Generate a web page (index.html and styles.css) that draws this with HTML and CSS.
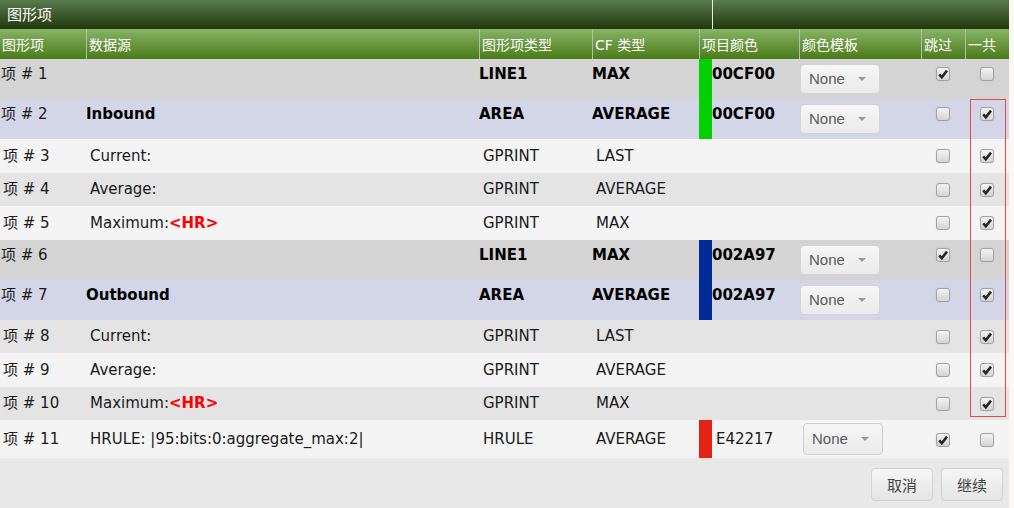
FILE: index.html
```html
<!DOCTYPE html>
<html lang="zh">
<head>
<meta charset="utf-8">
<title>图形项</title>
<link rel="stylesheet" href="styles.css">
</head>
<body>
<div class="panel">
  <div class="title-bar">
    <div class="title-main">图形项</div>
    <div class="title-rest"></div>
  </div>
  <table class="grid">
    <thead>
      <tr>
        <th class="c-item">图形项</th>
        <th class="c-src">数据源</th>
        <th class="c-type">图形项类型</th>
        <th class="c-cf">CF 类型</th>
        <th class="c-color">项目颜色</th>
        <th class="c-tpl">颜色模板</th>
        <th class="c-skip">跳过</th>
        <th class="c-total">一共</th>
      </tr>
    </thead>
    <tbody>
      <tr class="main grey">
        <td class="idx">项 # 1</td>
        <td></td>
        <td>LINE1</td>
        <td>MAX</td>
        <td class="color sw-green">00CF00</td>
        <td><span class="select">None<i class="caret"></i></span></td>
        <td class="chk"><span class="cb on"><svg viewBox="0 0 12 12"><path d="M2.2 6.3 L4.8 9.2 L10 2.6"/></svg></span></td>
        <td class="chk"><span class="cb"></span></td>
      </tr>
      <tr class="main lav">
        <td class="idx">项 # 2</td>
        <td>Inbound</td>
        <td>AREA</td>
        <td>AVERAGE</td>
        <td class="color sw-green">00CF00</td>
        <td><span class="select">None<i class="caret"></i></span></td>
        <td class="chk"><span class="cb"></span></td>
        <td class="chk"><span class="cb on"><svg viewBox="0 0 12 12"><path d="M2.2 6.3 L4.8 9.2 L10 2.6"/></svg></span></td>
      </tr>
      <tr class="sub light">
        <td class="idx">项 # 3</td>
        <td>Current:</td>
        <td>GPRINT</td>
        <td>LAST</td>
        <td></td>
        <td></td>
        <td class="chk"><span class="cb"></span></td>
        <td class="chk"><span class="cb on"><svg viewBox="0 0 12 12"><path d="M2.2 6.3 L4.8 9.2 L10 2.6"/></svg></span></td>
      </tr>
      <tr class="sub dark">
        <td class="idx">项 # 4</td>
        <td>Average:</td>
        <td>GPRINT</td>
        <td>AVERAGE</td>
        <td></td>
        <td></td>
        <td class="chk"><span class="cb"></span></td>
        <td class="chk"><span class="cb on"><svg viewBox="0 0 12 12"><path d="M2.2 6.3 L4.8 9.2 L10 2.6"/></svg></span></td>
      </tr>
      <tr class="sub light">
        <td class="idx">项 # 5</td>
        <td>Maximum:<b class="hr">&lt;HR&gt;</b></td>
        <td>GPRINT</td>
        <td>MAX</td>
        <td></td>
        <td></td>
        <td class="chk"><span class="cb"></span></td>
        <td class="chk"><span class="cb on"><svg viewBox="0 0 12 12"><path d="M2.2 6.3 L4.8 9.2 L10 2.6"/></svg></span></td>
      </tr>
      <tr class="main grey">
        <td class="idx">项 # 6</td>
        <td></td>
        <td>LINE1</td>
        <td>MAX</td>
        <td class="color sw-blue">002A97</td>
        <td><span class="select">None<i class="caret"></i></span></td>
        <td class="chk"><span class="cb on"><svg viewBox="0 0 12 12"><path d="M2.2 6.3 L4.8 9.2 L10 2.6"/></svg></span></td>
        <td class="chk"><span class="cb"></span></td>
      </tr>
      <tr class="main lav">
        <td class="idx">项 # 7</td>
        <td>Outbound</td>
        <td>AREA</td>
        <td>AVERAGE</td>
        <td class="color sw-blue">002A97</td>
        <td><span class="select">None<i class="caret"></i></span></td>
        <td class="chk"><span class="cb"></span></td>
        <td class="chk"><span class="cb on"><svg viewBox="0 0 12 12"><path d="M2.2 6.3 L4.8 9.2 L10 2.6"/></svg></span></td>
      </tr>
      <tr class="sub dark">
        <td class="idx">项 # 8</td>
        <td>Current:</td>
        <td>GPRINT</td>
        <td>LAST</td>
        <td></td>
        <td></td>
        <td class="chk"><span class="cb"></span></td>
        <td class="chk"><span class="cb on"><svg viewBox="0 0 12 12"><path d="M2.2 6.3 L4.8 9.2 L10 2.6"/></svg></span></td>
      </tr>
      <tr class="sub light">
        <td class="idx">项 # 9</td>
        <td>Average:</td>
        <td>GPRINT</td>
        <td>AVERAGE</td>
        <td></td>
        <td></td>
        <td class="chk"><span class="cb"></span></td>
        <td class="chk"><span class="cb on"><svg viewBox="0 0 12 12"><path d="M2.2 6.3 L4.8 9.2 L10 2.6"/></svg></span></td>
      </tr>
      <tr class="sub dark">
        <td class="idx">项 # 10</td>
        <td>Maximum:<b class="hr">&lt;HR&gt;</b></td>
        <td>GPRINT</td>
        <td>MAX</td>
        <td></td>
        <td></td>
        <td class="chk"><span class="cb"></span></td>
        <td class="chk"><span class="cb on"><svg viewBox="0 0 12 12"><path d="M2.2 6.3 L4.8 9.2 L10 2.6"/></svg></span></td>
      </tr>
      <tr class="sub light last">
        <td class="idx">项 # 11</td>
        <td>HRULE: |95:bits:0:aggregate_max:2|</td>
        <td>HRULE</td>
        <td>AVERAGE</td>
        <td class="color sw-red">E42217</td>
        <td><span class="select">None<i class="caret"></i></span></td>
        <td class="chk"><span class="cb on"><svg viewBox="0 0 12 12"><path d="M2.2 6.3 L4.8 9.2 L10 2.6"/></svg></span></td>
        <td class="chk"><span class="cb"></span></td>
      </tr>
    </tbody>
  </table>
  <div class="footer">
    <button class="btn">取消</button>
    <button class="btn">继续</button>
  </div>
  <div class="highlight"></div>
</div>
</body>
</html>
```

FILE: styles.css
```css
html, body {
  margin: 0;
  padding: 0;
}
body {
  background: #faf7f7;
  font-family: "DejaVu Sans", "Noto Sans CJK SC", sans-serif;
  font-size: 15px;
  color: #1a1a1a;
}
.panel {
  position: relative;
  width: 1009px;
}
.title-bar {
  display: flex;
  height: 29px;
  background: linear-gradient(#5a7b4e, #1e380b);
}
.title-main {
  box-sizing: border-box;
  width: 713px;
  border-right: 1px solid #e8ece4;
  padding-left: 7px;
  line-height: 28px;
  color: #fff;
  font-family: "Noto Sans CJK SC", sans-serif;
  font-size: 15px;
}
.title-rest {
  flex: 1;
}
.grid {
  width: 1009px;
  table-layout: fixed;
  border-collapse: separate;
  border-spacing: 0;
}
.grid th, .grid td {
  box-sizing: border-box;
  white-space: nowrap;
  overflow: hidden;
}
.grid th {
  height: 30px;
  padding: 0 0 1px 2px;
  text-align: left;
  font-weight: normal;
  font-family: "DejaVu Sans", "Noto Sans CJK SC", sans-serif;
  font-size: 14px;
  color: #fff;
  background: linear-gradient(#88b466, #4a7b18);
  border-left: 1px solid #b3bfa9;
}
.grid th.c-item { width: 86px; border-left: none; }
.grid th.c-src { width: 393px; }
.grid th.c-type { width: 113px; }
.grid th.c-cf { width: 107px; }
.grid th.c-color { width: 100px; }
.grid th.c-tpl { width: 122px; }
.grid th.c-skip { width: 44px; }
.grid th.c-total { width: 44px; }

.grey td { background: #d4d4d4; }
.lav td { background: #d3d6e7; }
.light td { background: #f4f4f4; }
.dark td { background: #e4e4e4; }

.main td {
  height: 40px;
  padding: 5px 0 0 0;
  vertical-align: top;
  line-height: 20px;
  font-weight: bold;
  color: #000;
}
.main td.idx {
  padding-left: 1px;
  font-weight: normal;
  color: #1a1a1a;
}
.sub td {
  height: 33.5px;
  padding: 0 0 0 4px;
  vertical-align: middle;
  line-height: 20px;
}
.sub td.idx { padding-left: 3px; }
.sub.last td {
  height: 39px;
  border-bottom: 1px solid #f1eaea;
}
.hr {
  color: #f00;
  font-weight: bold;
}
.color { padding-left: 13px !important; }
.sub .color { padding-left: 17px !important; }
.sw-green { box-shadow: inset 13px 0 0 #00cf00; }
.sw-blue { box-shadow: inset 13px 0 0 #002a97; }
.sw-red { box-shadow: inset 13px 0 0 #e42217; }

.select {
  box-sizing: border-box;
  display: inline-flex;
  align-items: center;
  width: 80px;
  height: 30px;
  padding: 0 0 0 8px;
  margin-left: 1px;
  border: 1px solid #d4d4d4;
  border-radius: 4px;
  background: linear-gradient(#f6f6f6, #ebebeb);
  font-family: "Liberation Sans", Arial, sans-serif;
  font-weight: normal;
  font-size: 15px;
  color: #5a5a5a;
  vertical-align: top;
}
.sub .select {
  margin-left: 0;
  height: 32px;
  border-color: #cfcfcf;
}
.caret {
  width: 0;
  height: 0;
  margin-left: 13px;
  border-left: 4px solid transparent;
  border-right: 4px solid transparent;
  border-top: 4px solid #9a9a9a;
}
.grid td.chk {
  padding-left: 0;
  text-align: center;
}
.main td.chk { padding-top: 8px; line-height: 14px; }
.cb {
  box-sizing: border-box;
  display: inline-block;
  width: 14px;
  height: 14px;
  border: 1px solid #a3a3a3;
  border-radius: 3px;
  background: linear-gradient(#f3f3f3, #d4d4d4);
  box-shadow: 0 0 1px rgba(0,0,0,0.2);
  vertical-align: middle;
}
.main .cb { vertical-align: top; }
.cb svg {
  display: block;
  width: 12px;
  height: 12px;
}
.cb svg path {
  fill: none;
  stroke: #262626;
  stroke-width: 2.6;
}
.footer {
  display: flex;
  justify-content: flex-end;
  gap: 8px;
  padding: 9px 6px 0 0;
  box-sizing: border-box;
  background: #e8e8e8;
  height: 50px;
}
.btn {
  box-sizing: border-box;
  height: 33px;
  padding: 0 15px;
  border: 1px solid #d2d2d2;
  border-radius: 4px;
  background: linear-gradient(#f6f6f6, #e5e5e5);
  font-family: "Noto Sans CJK SC", sans-serif;
  font-size: 15px;
  color: #444;
}
.highlight {
  position: absolute;
  left: 970px;
  top: 99px;
  width: 36px;
  height: 318px;
  box-sizing: border-box;
  border: 1px solid #e94646;
  pointer-events: none;
}
```
